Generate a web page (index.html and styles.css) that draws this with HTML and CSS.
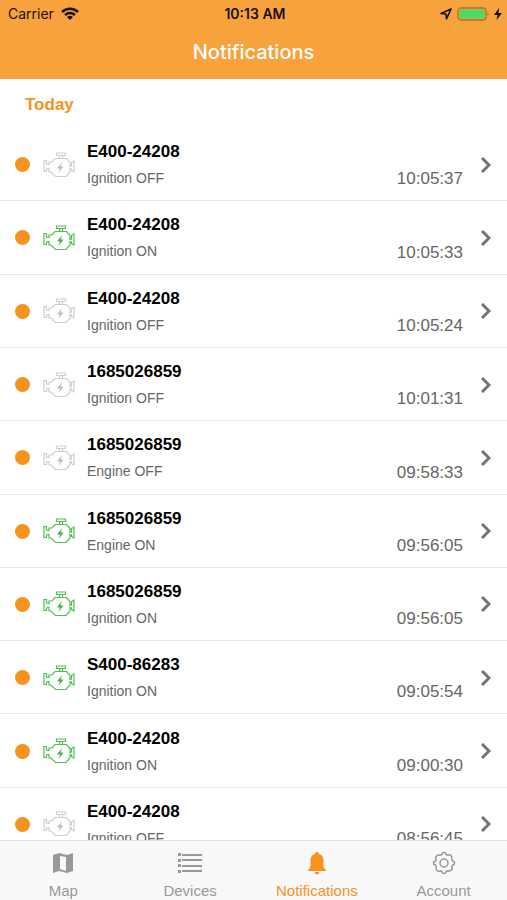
FILE: index.html
```html
<!DOCTYPE html>
<html lang="en">
<head>
  <meta charset="UTF-8">
  <meta name="viewport" content="width=device-width, initial-scale=1.0">
  <title>Notifications</title>
  <link rel="stylesheet" href="styles.css">
</head>
<body>

<svg class="symbols" aria-hidden="true">
  <symbol id="engine" viewBox="0 0 32 26">
    <path d="M13.500 1h9v2.500h-9zM16.500 3.500v3M19.500 3.500v3M12 6.500h11.500l3.500 4v4l1.500-.5V10.500L31 9v11l-2.500-1.500V17l-1.500-.5v3.500l-4 4.500H12.500L8 20H6v-3.500l-2.500.5v2.500H1v-11h2.500V12l2.500.5V10h3z"/>
    <path class="bolt" d="M19 10l-5 6.500h3L15.500 21l5-6.500h-3z"/>
  </symbol>
  <symbol id="chevron" viewBox="0 0 10 16">
    <path d="M1 1l7 7-7 7"/>
  </symbol>
</svg>

<header class="header">
  <div class="status-bar">
    <div class="carrier">
      <span>Carrier</span>
      <svg width="18" height="13" viewBox="0 0 18 13" fill="none" stroke="#17110a" stroke-width="2.500">
        <path d="M1 5a11.500 11.500 0 0 1 16 0M4 8a7.500 7.500 0 0 1 10 0"/>
        <path d="M6 10a4.500 4.500 0 0 1 6 0l-3 3z" fill="#17110a" stroke="none"/>
      </svg>
    </div>
    <strong class="clock">10:13 AM</strong>
    <div class="battery">
      <svg width="12" height="12" viewBox="0 0 12 12" fill="none" stroke="#17110a" stroke-width="1.600" stroke-linejoin="round">
        <path d="M11 1L1 5.500l5 .5.500 5z"/>
      </svg>
      <svg width="32" height="14" viewBox="0 0 32 14">
        <rect x="1" y="1" width="28" height="12" rx="3" fill="none" stroke="#b0702a" stroke-width="1.300"/>
        <rect x="2.500" y="2.500" width="25" height="9" rx="1" fill="#4cd964"/>
        <path d="M30.500 5q2 2 0 4z" fill="#b0702a"/>
      </svg>
      <svg width="8" height="12" viewBox="0 0 8 12">
        <path d="M5 0L0 7h3.500L2.500 12 8 5H4.500z" fill="#17110a"/>
      </svg>
    </div>
  </div>
  <h1 class="title">Notifications</h1>
</header>

<main class="content">
  <h2 class="day">Today</h2>
  <ul class="list">
    <li><a class="row" href="#">
      <span class="dot"></span>
      <svg class="engine"><use href="#engine"/></svg>
      <span class="info"><strong class="device">E400-24208</strong><span class="event">Ignition OFF</span></span>
      <time class="time">10:05:37</time>
      <svg class="chevron"><use href="#chevron"/></svg>
    </a></li>
    <li><a class="row" href="#">
      <span class="dot"></span>
      <svg class="engine on"><use href="#engine"/></svg>
      <span class="info"><strong class="device">E400-24208</strong><span class="event">Ignition ON</span></span>
      <time class="time">10:05:33</time>
      <svg class="chevron"><use href="#chevron"/></svg>
    </a></li>
    <li><a class="row" href="#">
      <span class="dot"></span>
      <svg class="engine"><use href="#engine"/></svg>
      <span class="info"><strong class="device">E400-24208</strong><span class="event">Ignition OFF</span></span>
      <time class="time">10:05:24</time>
      <svg class="chevron"><use href="#chevron"/></svg>
    </a></li>
    <li><a class="row" href="#">
      <span class="dot"></span>
      <svg class="engine"><use href="#engine"/></svg>
      <span class="info"><strong class="device">1685026859</strong><span class="event">Ignition OFF</span></span>
      <time class="time">10:01:31</time>
      <svg class="chevron"><use href="#chevron"/></svg>
    </a></li>
    <li><a class="row" href="#">
      <span class="dot"></span>
      <svg class="engine"><use href="#engine"/></svg>
      <span class="info"><strong class="device">1685026859</strong><span class="event">Engine OFF</span></span>
      <time class="time">09:58:33</time>
      <svg class="chevron"><use href="#chevron"/></svg>
    </a></li>
    <li><a class="row" href="#">
      <span class="dot"></span>
      <svg class="engine on"><use href="#engine"/></svg>
      <span class="info"><strong class="device">1685026859</strong><span class="event">Engine ON</span></span>
      <time class="time">09:56:05</time>
      <svg class="chevron"><use href="#chevron"/></svg>
    </a></li>
    <li><a class="row" href="#">
      <span class="dot"></span>
      <svg class="engine on"><use href="#engine"/></svg>
      <span class="info"><strong class="device">1685026859</strong><span class="event">Ignition ON</span></span>
      <time class="time">09:56:05</time>
      <svg class="chevron"><use href="#chevron"/></svg>
    </a></li>
    <li><a class="row" href="#">
      <span class="dot"></span>
      <svg class="engine on"><use href="#engine"/></svg>
      <span class="info"><strong class="device">S400-86283</strong><span class="event">Ignition ON</span></span>
      <time class="time">09:05:54</time>
      <svg class="chevron"><use href="#chevron"/></svg>
    </a></li>
    <li><a class="row" href="#">
      <span class="dot"></span>
      <svg class="engine on"><use href="#engine"/></svg>
      <span class="info"><strong class="device">E400-24208</strong><span class="event">Ignition ON</span></span>
      <time class="time">09:00:30</time>
      <svg class="chevron"><use href="#chevron"/></svg>
    </a></li>
    <li><a class="row" href="#">
      <span class="dot"></span>
      <svg class="engine"><use href="#engine"/></svg>
      <span class="info"><strong class="device">E400-24208</strong><span class="event">Ignition OFF</span></span>
      <time class="time">08:56:45</time>
      <svg class="chevron"><use href="#chevron"/></svg>
    </a></li>
  </ul>
</main>

<nav class="tabs">
  <a class="tab" href="#">
    <svg width="24" height="24" viewBox="0 0 24 24" fill="currentColor">
      <path fill-rule="evenodd" d="M2 4l6-2 8 2 6-2v18l-6 2-8-2-6 2zM9 5v13l6 2V6z"/>
    </svg>
    <span>Map</span>
  </a>
  <a class="tab" href="#">
    <svg width="26" height="24" viewBox="0 0 26 24" fill="currentColor">
      <path d="M1 2h3v3H1zM1 8h3v3H1zM1 13h3v3H1zM1 19h3v3H1zM5 3h20v2H5zM5 8h20v2H5zM5 14h20v2H5zM5 19h20v2H5z"/>
    </svg>
    <span>Devices</span>
  </a>
  <a class="tab active" href="#">
    <svg width="24" height="24" viewBox="0 0 24 24" fill="currentColor">
      <path d="M12 1c-1.200 0-2 .8-2 2C6.500 4 5.500 7 5.500 10v5c0 1.500-.8 2.500-2.500 4v1h18v-1c-1.700-1.500-2.500-2.500-2.500-4v-5c0-3-1-6-4.500-7 0-1.200-.8-2-2-2zM9.500 21h5c-.3 1.700-1.200 2.500-2.500 2.500S9.800 22.700 9.500 21z"/>
    </svg>
    <span>Notifications</span>
  </a>
  <a class="tab" href="#">
    <svg width="24" height="24" viewBox="0 0 24 24" fill="none" stroke="currentColor" stroke-width="1.500" stroke-linejoin="round">
      <path d="M10 3.500Q10 1.500 12 1.500T14 3.500L16 4.300Q17.500 3 19 4.500T19.700 8L20.500 10Q22.500 10 22.500 12T20.500 14L19.700 16Q21 17.500 19.500 19T16 19.700L14 20.500Q14 22.500 12 22.500T10 20.500L8 19.700Q6.500 21 5 19.500T4.300 16L3.500 14Q1.500 14 1.500 12T3.500 10L4.300 8Q3 6.500 4.500 5T8 4.300z"/>
      <circle cx="12" cy="12" r="4"/>
    </svg>
    <span>Account</span>
  </a>
</nav>

</body>
</html>
```
FILE: styles.css
```css
* {
  box-sizing: border-box;
}
body {
  display: flex;
  flex-direction: column;
  height: 100vh;
  margin: 0;
  font-family: "Liberation Sans", Arial, sans-serif;
  background-color: #fff;
}
a {
  color: inherit;
  text-decoration: none;
}
.symbols {
  position: absolute;
  width: 0;
  height: 0;
}
.header {
  flex: none;
  padding-bottom: 12px;
  font-family: Inter, sans-serif;
  background-color: #f7a23d;
}
.status-bar {
  display: grid;
  grid-template-columns: 1fr auto 1fr;
  align-items: center;
  height: 27px;
  padding: 0 5px 0 8px;
  font-size: 14px;
  color: #17110a;
}
.carrier,
.battery {
  display: flex;
  align-items: center;
  gap: 7px;
}
.clock {
  font-weight: 600;
}
.battery {
  justify-content: flex-end;
  gap: 5px;
}
.title {
  margin: 0;
  padding-top: 11px;
  font-size: 20px;
  font-weight: 500;
  line-height: 29px;
  text-align: center;
  color: #fff;
}
.content {
  flex: 1;
  min-height: 0;
  overflow: hidden;
}
.day {
  margin: 0;
  padding: 15px 25px 12px;
  font-size: 17px;
  line-height: 22px;
  color: #f6921e;
}
.list {
  display: grid;
  grid-auto-rows: 1fr;
  min-height: 733px;
  margin: 0;
  padding: 0;
  list-style: none;
}
.row {
  display: flex;
  align-items: center;
  height: 100%;
  padding: 1px 16px 0 15px;
  border-bottom: 1px solid #e6e6e6;
}
.dot {
  width: 15px;
  height: 15px;
  border-radius: 50%;
  background-color: #f6921e;
}
.engine {
  width: 32px;
  height: 26px;
  margin: 0 12px 0 13px;
  fill: none;
  stroke: #cfcfcf;
  stroke-width: 1.2;
  color: #bdbdbd;
}
.engine.on {
  stroke: #4fbf4f;
  color: #3fb53f;
}
.bolt {
  fill: currentColor;
  stroke: none;
}
.info {
  display: flex;
  flex: 1;
  flex-direction: column;
  padding-top: 1px;
}
.device {
  font-size: 17px;
  line-height: 26px;
  color: #000;
}
.event {
  font-size: 14px;
  line-height: 26px;
  color: #666;
}
.time {
  align-self: flex-end;
  margin-right: 18px;
  font-size: 17px;
  line-height: 26px;
  padding-bottom: 8px;
  color: #666;
}
.chevron {
  width: 10px;
  height: 16px;
  fill: none;
  stroke: #737373;
  stroke-width: 3;
}
.tabs {
  display: grid;
  flex: none;
  grid-template-columns: repeat(4, 1fr);
  height: 60px;
  border-top: 1px solid #e2e2e2;
  background-color: #f8f8f8;
}
.tab {
  display: flex;
  flex-direction: column;
  align-items: center;
  gap: 7px;
  padding-top: 10px;
  font-size: 15px;
  line-height: 18px;
  color: #999;
}
.tab.active {
  color: #f6921e;
}
```
